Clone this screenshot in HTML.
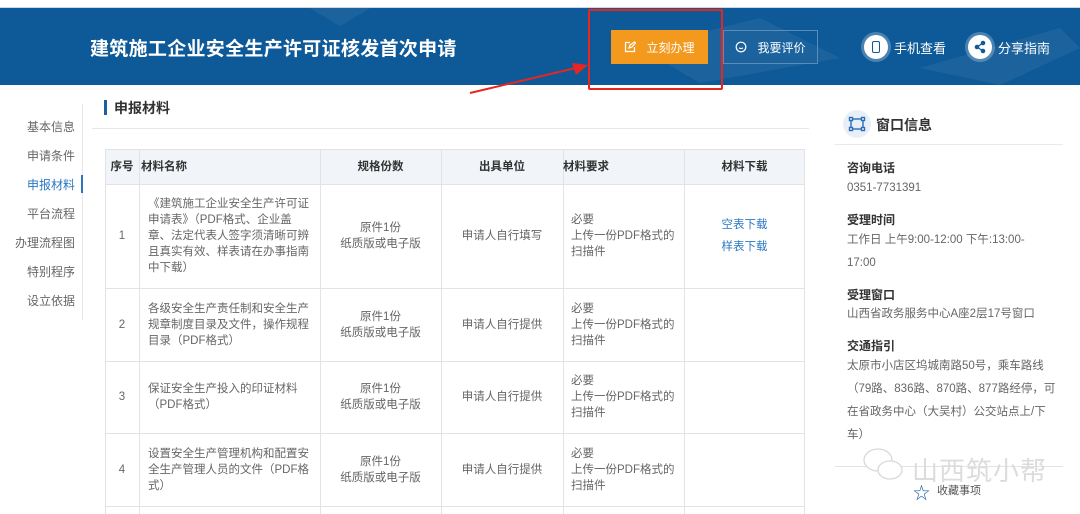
<!DOCTYPE html>
<html><head><meta charset="utf-8"><style>
*{margin:0;padding:0;box-sizing:border-box}
body{width:1080px;height:514px;overflow:hidden;background:#fff;font-family:"Liberation Sans","Noto Sans CJK SC",sans-serif;position:relative;color:#666}
.a{position:absolute}
.hdr{left:0;top:8px;width:1080px;height:77px;background:#0e5a98}
.nav{font-size:12px;color:#666;right:1005px;text-align:right;width:80px}
.cell{position:absolute;font-size:11.5px;line-height:16px;color:#666;display:flex;align-items:center}
.c{justify-content:center;text-align:center}
.lab{font-size:12px;font-weight:bold;color:#333;left:847px}
.val{font-size:11.5px;color:#666;left:847px;line-height:23px}
</style></head><body>
<div class="a" style="left:0;top:7px;width:1080px;height:1px;background:#c9d6e3"></div>
<div class="a hdr"></div>
<svg class="a" style="left:0;top:8px" width="1080" height="77"><g fill="#ffffff" opacity="0.06"><polygon points="310,0 370,0 340,18"/><polygon points="640,40 760,10 840,50 700,75"/><polygon points="920,60 1060,20 1080,40 1000,77"/></g></svg>
<div class="a" style="left:90px;top:34px;font-size:19px;font-weight:bold;color:#fff;letter-spacing:0.3px">建筑施工企业安全生产许可证核发首次申请</div>
<div class="a" style="left:611px;top:30px;width:97px;height:34px;background:#f39a1e;color:#fff;font-size:12px;display:flex;align-items:center;justify-content:center;gap:10px"><svg width="12" height="12" viewBox="0 0 12 12" fill="none" stroke="#fff" stroke-width="1.2"><path d="M6 1.5H1.5v9h9V6M5 7l1-3 4.5-3 1 1L8 6z"/></svg>立刻办理</div>
<div class="a" style="left:723px;top:30px;width:95px;height:34px;border:1px solid #5b8dbb;color:#fff;font-size:12px;display:flex;align-items:center;justify-content:center;gap:10px"><svg width="12" height="12" viewBox="0 0 12 12" fill="none" stroke="#fff" stroke-width="1.2"><circle cx="6" cy="6" r="4.8"/><path d="M4 6.8q2 1.5 4 0"/></svg>我要评价</div>
<div class="a" style="left:588px;top:9px;width:135px;height:81px;border:2px solid #e8261f;border-radius:2px"></div>
<svg class="a" style="left:460px;top:55px" width="140" height="45"><line x1="10" y1="38" x2="120" y2="12" stroke="#e8261f" stroke-width="2"/><polygon points="128,10 112,8 116,20" fill="#e8261f"/></svg>
<div class="a" style="left:864px;top:35px;width:24px;height:24px;border-radius:50%;background:#fff;box-shadow:0 0 0 3px rgba(255,255,255,.25)"><div style="margin:6px 8px;width:8px;height:12px;border:1.5px solid #0e5a98;border-radius:2px"></div></div>
<div class="a" style="left:894px;top:38px;font-size:13px;color:#fff">手机查看</div>
<div class="a" style="left:968px;top:35px;width:24px;height:24px;border-radius:50%;background:#fff;box-shadow:0 0 0 3px rgba(255,255,255,.25)"><svg width="24" height="24" viewBox="0 0 24 24" fill="#0e5a98" stroke="#0e5a98"><circle cx="15" cy="8" r="1.8"/><circle cx="9" cy="12" r="1.8"/><circle cx="15" cy="16" r="1.8"/><path d="M15 8 9 12 15 16" fill="none" stroke-width="1.2"/></svg></div>
<div class="a" style="left:998px;top:38px;font-size:13px;color:#fff">分享指南</div>

<div class="a" style="left:82px;top:104px;width:1px;height:216px;background:#e6e6e6"></div>
<div class="a nav" style="top:118px">基本信息</div>
<div class="a nav" style="top:147px">申请条件</div>
<div class="a nav" style="top:176px;color:#2a78c2">申报材料</div>
<div class="a" style="left:81px;top:175px;width:2px;height:18px;background:#2a78c2"></div>
<div class="a nav" style="top:205px">平台流程</div>
<div class="a nav" style="top:234px">办理流程图</div>
<div class="a nav" style="top:263px">特别程序</div>
<div class="a nav" style="top:292px">设立依据</div>

<div class="a" style="left:104px;top:100px;width:3px;height:15px;background:#1d5fa0"></div>
<div class="a" style="left:114px;top:98px;font-size:14px;font-weight:bold;color:#333">申报材料</div>
<div class="a" style="left:92px;top:128px;width:717px;height:1px;background:#e8e8e8"></div>

<div class="a" style="left:105px;top:149px;width:700px;height:365px;border:1px solid #e3e3e3;border-bottom:none"></div>
<div class="a" style="left:106px;top:150px;width:698px;height:34px;background:#f1f5f9"></div>
<div class="a" style="left:139px;top:149px;width:1px;height:365px;background:#e3e3e3"></div>
<div class="a" style="left:320px;top:149px;width:1px;height:365px;background:#e3e3e3"></div>
<div class="a" style="left:441px;top:149px;width:1px;height:365px;background:#e3e3e3"></div>
<div class="a" style="left:563px;top:149px;width:1px;height:365px;background:#e3e3e3"></div>
<div class="a" style="left:684px;top:149px;width:1px;height:365px;background:#e3e3e3"></div>
<div class="a" style="left:105px;top:184px;width:700px;height:1px;background:#e3e3e3"></div>
<div class="a" style="left:105px;top:288px;width:700px;height:1px;background:#e3e3e3"></div>
<div class="a" style="left:105px;top:361px;width:700px;height:1px;background:#e3e3e3"></div>
<div class="a" style="left:105px;top:433px;width:700px;height:1px;background:#e3e3e3"></div>
<div class="a" style="left:105px;top:506px;width:700px;height:1px;background:#e3e3e3"></div>

<div class="cell" style="left:105px;top:149px;width:34px;height:35px;justify-content:center;font-weight:bold;color:#333">序号</div>
<div class="cell" style="left:141px;top:149px;height:35px;font-weight:bold;color:#333">材料名称</div>
<div class="cell c" style="left:320px;top:149px;width:121px;height:35px;font-weight:bold;color:#333">规格份数</div>
<div class="cell c" style="left:441px;top:149px;width:122px;height:35px;font-weight:bold;color:#333">出具单位</div>
<div class="cell" style="left:563px;top:149px;height:35px;font-weight:bold;color:#333">材料要求</div>
<div class="cell c" style="left:684px;top:149px;width:121px;height:35px;font-weight:bold;color:#333">材料下载</div>

<div class="cell c" style="left:105px;top:184px;width:34px;height:104px">1</div>
<div class="cell" style="left:148px;top:184px;width:166px;height:104px">《建筑施工企业安全生产许可证申请表》（PDF格式、企业盖章、法定代表人签字须清晰可辨且真实有效、样表请在办事指南中下载）</div>
<div class="cell c" style="left:320px;top:184px;width:121px;height:104px">原件1份<br>纸质版或电子版</div>
<div class="cell c" style="left:441px;top:184px;width:122px;height:104px">申请人自行填写</div>
<div class="cell" style="left:571px;top:184px;width:110px;height:104px">必要<br>上传一份PDF格式的<br>扫描件</div>
<div class="cell c" style="left:684px;top:184px;width:121px;height:104px;color:#2a78c2;line-height:22px">空表下载<br>样表下载</div>

<div class="cell c" style="left:105px;top:288px;width:34px;height:73px">2</div>
<div class="cell" style="left:148px;top:288px;width:166px;height:73px">各级安全生产责任制和安全生产规章制度目录及文件，操作规程目录（PDF格式）</div>
<div class="cell c" style="left:320px;top:288px;width:121px;height:73px">原件1份<br>纸质版或电子版</div>
<div class="cell c" style="left:441px;top:288px;width:122px;height:73px">申请人自行提供</div>
<div class="cell" style="left:571px;top:288px;width:110px;height:73px">必要<br>上传一份PDF格式的<br>扫描件</div>

<div class="cell c" style="left:105px;top:361px;width:34px;height:72px">3</div>
<div class="cell" style="left:148px;top:361px;width:166px;height:72px">保证安全生产投入的印证材料（PDF格式）</div>
<div class="cell c" style="left:320px;top:361px;width:121px;height:72px">原件1份<br>纸质版或电子版</div>
<div class="cell c" style="left:441px;top:361px;width:122px;height:72px">申请人自行提供</div>
<div class="cell" style="left:571px;top:361px;width:110px;height:72px">必要<br>上传一份PDF格式的<br>扫描件</div>

<div class="cell c" style="left:105px;top:433px;width:34px;height:73px">4</div>
<div class="cell" style="left:148px;top:433px;width:166px;height:73px">设置安全生产管理机构和配置安全生产管理人员的文件（PDF格式）</div>
<div class="cell c" style="left:320px;top:433px;width:121px;height:73px">原件1份<br>纸质版或电子版</div>
<div class="cell c" style="left:441px;top:433px;width:122px;height:73px">申请人自行提供</div>
<div class="cell" style="left:571px;top:433px;width:110px;height:73px">必要<br>上传一份PDF格式的<br>扫描件</div>

<div class="a" style="left:843px;top:110px;width:28px;height:28px;border-radius:50%;background:#e8eff7"><svg width="28" height="28" viewBox="0 0 28 28" fill="none" stroke="#2a6fb5" stroke-width="1.4"><rect x="8" y="9" width="12" height="10"/><rect x="6.5" y="7.5" width="3" height="3" fill="#fff"/><rect x="18.5" y="7.5" width="3" height="3" fill="#fff"/><rect x="6.5" y="17.5" width="3" height="3" fill="#fff"/><rect x="18.5" y="17.5" width="3" height="3" fill="#fff"/></svg></div>
<div class="a" style="left:876px;top:115px;font-size:14px;font-weight:bold;color:#333">窗口信息</div>
<div class="a" style="left:835px;top:144px;width:228px;height:1px;background:#eaeaea"></div>
<div class="a lab" style="top:159px">咨询电话</div>
<div class="a val" style="top:177px">0351-7731391</div>
<div class="a lab" style="top:211px">受理时间</div>
<div class="a val" style="top:229px;width:188px">工作日 上午9:00-12:00 下午:13:00-17:00</div>
<div class="a lab" style="top:286px">受理窗口</div>
<div class="a val" style="top:303px">山西省政务服务中心A座2层17号窗口</div>
<div class="a lab" style="top:337px">交通指引</div>
<div class="a val" style="top:355px;width:210px">太原市小店区坞城南路50号，乘车路线（79路、836路、870路、877路经停，可在省政务中心（大吴村）公交站点上/下车）</div>
<div class="a" style="left:835px;top:466px;width:228px;height:1px;background:#e3e3e3"></div>
<svg class="a" style="left:860px;top:446px" width="50" height="40" fill="none" stroke="#d8d8d8" stroke-width="1.3"><ellipse cx="18" cy="14" rx="14" ry="11" fill="#fff"/><ellipse cx="30" cy="24" rx="12" ry="9" fill="#fff"/></svg>
<div class="a" style="left:912px;top:451px;font-size:26px;color:#dcdcdc;letter-spacing:1px">山西筑小帮</div>
<div class="a" style="left:913px;top:479px;font-size:17px;color:#1d5fa0">☆</div>
<div class="a" style="left:937px;top:482px;font-size:11px;color:#555">收藏事项</div>
</body></html>
